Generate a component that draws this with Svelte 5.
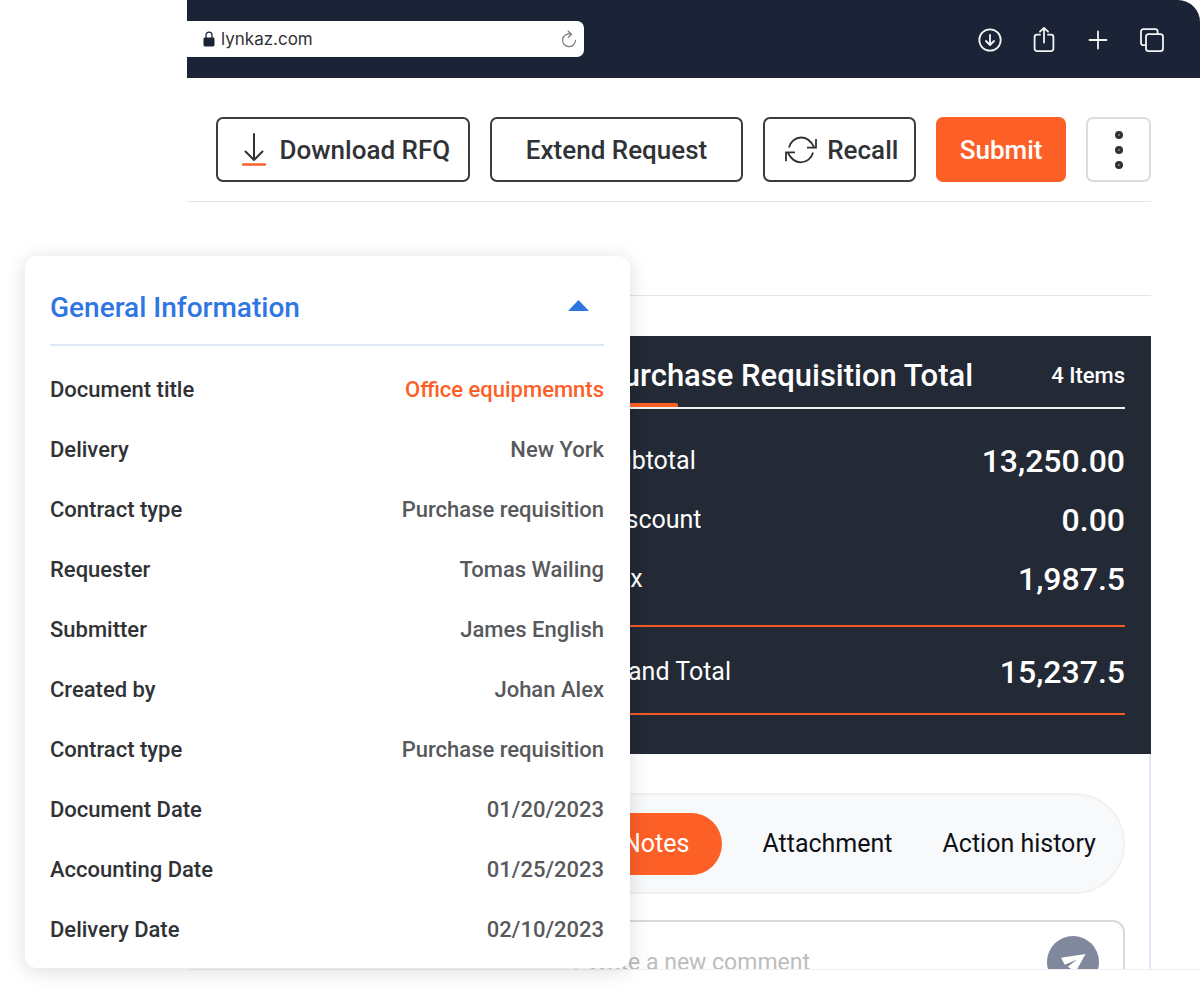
<script lang="ts">
  let open = $state(true);
  let activeTab = $state('Notes');
  let comment = $state('');

  const details = [
    { label: 'Document title', value: 'Office equipmemnts', accent: true },
    { label: 'Delivery', value: 'New York' },
    { label: 'Contract type', value: 'Purchase requisition' },
    { label: 'Requester', value: 'Tomas Wailing' },
    { label: 'Submitter', value: 'James English' },
    { label: 'Created by', value: 'Johan Alex' },
    { label: 'Contract type', value: 'Purchase requisition' },
    { label: 'Document Date', value: '01/20/2023' },
    { label: 'Accounting Date', value: '01/25/2023' },
    { label: 'Delivery Date', value: '02/10/2023' },
  ];

  const amounts = [
    { label: 'Subtotal', value: '13,250.00' },
    { label: 'Discount', value: '0.00' },
    { label: 'Tax', value: '1,987.5' },
  ];

  const tabs = ['Notes', 'Attachment', 'Action history'];
</script>

<main>
  <div class="browser">
    <header class="chrome">
      <div class="address">
        <svg width="12" height="16" viewBox="0 0 12 16" aria-hidden="true">
          <path d="M3 7V4.2a3 3 0 0 1 6 0V7" fill="none" stroke="#1b2336" stroke-width="1.3" />
          <rect x="0.5" y="6.5" width="11" height="9" rx="1.4" fill="#1b2336" />
        </svg>
        <input type="text" value="lynkaz.com" aria-label="Address" />
        <button class="icon" aria-label="Reload">
          <svg width="16" height="18" viewBox="0 0 16 18" fill="none" stroke="#777" stroke-width="1.2" stroke-linecap="round" stroke-linejoin="round">
            <path d="M9.6 4.1A6.4 6.4 0 1 0 14.4 10.3" />
            <path d="M7.2 1.2l3.3 3-3.3 3.2" />
          </svg>
        </button>
      </div>
      <div class="chrome-actions">
        <button class="icon" aria-label="Downloads">
          <svg width="26" height="26" viewBox="0 0 26 26">
            <circle cx="13" cy="13" r="10.7" />
            <path d="M13 8v9.6M9 14l4 4 4-4" />
          </svg>
        </button>
        <button class="icon" aria-label="Share">
          <svg width="26" height="26" viewBox="0 0 26 26">
            <path d="M9 7.7H6a2.4 2.4 0 0 0-2.4 2.4v11.6A2.4 2.4 0 0 0 6 24.1h14a2.4 2.4 0 0 0 2.4-2.4V10.1A2.4 2.4 0 0 0 20 7.7h-3" />
            <path d="M13 15.5V1M9 4.7L13 .8l4 3.9" />
          </svg>
        </button>
        <button class="icon" aria-label="New tab">
          <svg width="26" height="26" viewBox="0 0 26 26">
            <path d="M13 4.5v17M4.5 13h17" />
          </svg>
        </button>
        <button class="icon" aria-label="Show tabs">
          <svg width="26" height="26" viewBox="0 0 26 26">
            <rect x="7" y="7.2" width="17" height="17" rx="2.6" />
            <path d="M7 18.2H4.3A2.3 2.3 0 0 1 2 15.900V4.5a2.3 2.3 0 0 1 2.3-2.3h12a2.3 2.3 0 0 1 2.3 2.3v2.7" />
          </svg>
        </button>
      </div>
    </header>

    <div class="page">
      <div class="toolbar">
        <button class="btn download">
          <svg width="24" height="34" viewBox="0 0 24 34" fill="none" stroke-linecap="round" stroke-linejoin="round">
            <path d="M12 1v26M3.5 18.5L12 27l8.5-8.5" stroke="#303236" stroke-width="2" />
            <path d="M1 31.5h22" stroke="#fd6027" stroke-width="2.4" />
          </svg>
          Download RFQ
        </button>
        <button class="btn extend">Extend Request</button>
        <button class="btn recall">
          <svg width="32" height="28" viewBox="0 0 32 28" fill="none" stroke="#303236" stroke-width="1.8">
            <path d="M4 11.5C5.5 5.5 10.5 1.5 16 1.5c5.5 0 10 3.5 13 9.5M31 3v8.7h-9" />
            <path d="M28 16.5C26.5 22.5 21.5 26.3 16 26.3c-5.5 0-10-3.5-13-9.3M1 25.3v-9h9" />
          </svg>
          Recall
        </button>
        <button class="btn submit">Submit</button>
        <button class="btn more" aria-label="More actions">
          <svg width="10" height="40" viewBox="0 0 10 40" fill="#888" stroke="#303236" stroke-width="3">
            <circle cx="5" cy="5" r="2.5" />
            <circle cx="5" cy="20" r="2.5" />
            <circle cx="5" cy="35" r="2.5" />
          </svg>
        </button>
      </div>

      <div class="spacer"></div>

      <div class="column">
        <section class="summary">
          <div class="summary-head">
            <h2>Purchase Requisition Total</h2>
            <span class="items">4 Items</span>
          </div>
          <dl class="amounts">
            {#each amounts as row}
              <div class="amount">
                <dt>{row.label}</dt>
                <dd>{row.value}</dd>
              </div>
            {/each}
          </dl>
          <dl class="grand">
            <div class="amount">
              <dt>Grand Total</dt>
              <dd>15,237.5</dd>
            </div>
          </dl>
        </section>

        <section class="activity">
          <div class="tabs" role="tablist">
            {#each tabs as tab}
              <button role="tab" aria-selected={activeTab === tab} class:active={activeTab === tab} onclick={() => (activeTab = tab)}>{tab}</button>
            {/each}
          </div>
          <div class="composer">
            <input type="text" placeholder="Write a new comment" aria-label="Comment" bind:value={comment} />
            <button class="send" aria-label="Send">
              <svg width="26" height="26" viewBox="0 -4 26 26" fill="#fff">
                <path d="M25.5 1L1 4.8l3.800 6.900L17 6.500 7.800 13.800l3 2L14.500 21z" />
              </svg>
            </button>
          </div>
        </section>
      </div>
    </div>
  </div>

  <section class="card">
    <h2>
      <button aria-expanded={open} onclick={() => (open = !open)}>
        General Information
        <svg class:closed={!open} width="21" height="14" viewBox="0 0 21 14" aria-hidden="true">
          <path d="M10.5 0L21 11H0z" fill="#2f76e2" />
        </svg>
      </button>
    </h2>
    {#if open}
      <dl class="details">
        {#each details as row}
          <div>
            <dt>{row.label}</dt>
            <dd class:accent={row.accent}>{row.value}</dd>
          </div>
        {/each}
      </dl>
    {/if}
  </section>
</main>

<style>
  :global(body) { margin: 0; background: #fff; }

  main {
    position: relative;
    box-sizing: border-box;
    height: 100vh;
    padding: 0 0 26px 187px;
    overflow: hidden;
    font-family: Roboto, "Noto Sans", sans-serif;
    color: #303236;
  }

  button, input { font: inherit; color: inherit; }
  button { border: 0; padding: 0; background: none; cursor: pointer; }
  svg { display: block; flex: none; }
  h2, dl, dd { margin: 0; }
  h2 { font-weight: 500; }

  .browser {
    box-sizing: border-box;
    height: 100%;
    overflow: hidden;
    border-bottom: 1px solid #f0f0f1;
    border-top-right-radius: 22px;
  }

  .chrome {
    display: flex;
    align-items: center;
    justify-content: space-between;
    height: 78px;
    padding-right: 35px;
    background: #1b2336;
  }
  .address {
    display: flex;
    align-items: center;
    gap: 6px;
    box-sizing: border-box;
    width: 397px;
    height: 36px;
    padding: 0 7px 0 16px;
    border-radius: 0 7px 7px 0;
    background: #fff;
  }
  .address input {
    flex: 1;
    min-width: 0;
    border: 0;
    padding: 0;
    font-family: Inter, sans-serif;
    font-size: 17px;
  }
  .chrome-actions { display: flex; gap: 28px; padding-top: 1px; }
  .chrome-actions svg { fill: none; stroke: #f4f4f4; stroke-width: 1.8; stroke-linecap: round; stroke-linejoin: round; }

  .page { padding-right: 49px; }
  .toolbar {
    display: flex;
    gap: 20px;
    padding: 39px 0 19px 29px;
    border-bottom: 1px solid #dfe6ee;
  }
  .btn {
    display: flex;
    align-items: center;
    justify-content: center;
    box-sizing: border-box;
    height: 65px;
    border: 2px solid #3a3b3f;
    border-radius: 7px;
    font-size: 26px;
    font-weight: 500;
    white-space: nowrap;
  }
  .download { flex: 1 1 254px; gap: 14px; padding-left: 6px; }
  .extend { flex: 1 1 254px; }
  .recall { flex: 1 1 153px; gap: 10px; padding-left: 4px; }
  .submit { flex: 1 1 130px; border-color: #fd6027; background: #fd6027; color: #fff; }
  .more { flex: 1 1 65px; border-color: #dcdcdc; }

  .spacer { height: 93px; border-bottom: 1px solid #dfe6ee; }

  .column { margin: 40px 0 0 362px; }
  .summary {
    padding: 18px 26px 39px 54px;
    background: #232935;
    color: #fff;
  }
  .summary-head {
    position: relative;
    display: flex;
    align-items: center;
    justify-content: space-between;
    height: 43px;
    padding-bottom: 10px;
    border-bottom: 2px solid #f2f2f0;
  }
  .summary-head::after {
    content: "";
    position: absolute;
    left: 0;
    bottom: 0;
    width: 75px;
    height: 4px;
    border-radius: 2px 2px 0 0;
    background: #fd6027;
  }
  .summary-head h2 { font-size: 31px; line-height: 42px; }
  .items { font-size: 22px; font-weight: 500; }
  .amounts { padding: 22px 0 17px; }
  .amount {
    display: flex;
    align-items: center;
    justify-content: space-between;
    height: 59px;
  }
  .amount dt { font-size: 25px; }
  .amount dd { font-size: 32px; font-weight: 500; }
  .grand {
    padding: 15px 0 12px;
    border: solid #f15a25;
    border-width: 2px 0;
  }

  .activity {
    padding: 39px 24px 0 26px;
    border-right: 2px solid #dfe9f6;
  }
  .tabs {
    display: flex;
    align-items: center;
    box-sizing: border-box;
    height: 101px;
    padding: 0 4px 0 13px;
    border: 2px solid #f0f1f2;
    border-radius: 51px;
    background: #f8f9fb;
    color: #0e1016;
    font-size: 25px;
  }
  .tabs button { height: 62px; padding: 0 25px; border-radius: 31px; white-space: nowrap; }
  .tabs .active { margin-right: 15px; padding: 0 33px; background: #fd6027; color: #fff; }

  .composer {
    display: flex;
    align-items: center;
    justify-content: space-between;
    box-sizing: border-box;
    height: 84px;
    margin-top: 26px;
    padding: 0 24px 0 10px;
    border: 2px solid #dadada;
    border-radius: 12px;
  }
  .composer input { flex: 1; min-width: 0; border: 0; padding: 0; font-size: 23px; outline: 0; }
  .composer input::placeholder { color: #bdbdbd; opacity: 1; }
  .send {
    display: flex;
    align-items: center;
    justify-content: center;
    width: 52px;
    height: 52px;
    border-radius: 50%;
    background: #80889e;
  }

  .card {
    position: absolute;
    top: 256px;
    left: 25px;
    box-sizing: border-box;
    width: calc(50% + 5px);
    padding: 14px 26px 9px 25px;
    border-radius: 12px;
    background: #fff;
    box-shadow: 0 3px 20px rgba(0, 0, 0, 0.14);
  }
  .card h2 { border-bottom: 2px solid #dfe8f5; color: #2f76e2; font-size: 28px; }
  .card h2 button {
    display: flex;
    align-items: center;
    justify-content: space-between;
    width: 100%;
    height: 74px;
    padding-right: 15px;
  }
  .closed { transform: rotate(180deg); }
  .details { padding-top: 13px; font-size: 22px; font-weight: 500; }
  .details div {
    display: flex;
    align-items: center;
    justify-content: space-between;
    height: 60px;
  }
  .details dd { color: #58595c; }
  .details .accent { color: #fd6027; }
</style>
